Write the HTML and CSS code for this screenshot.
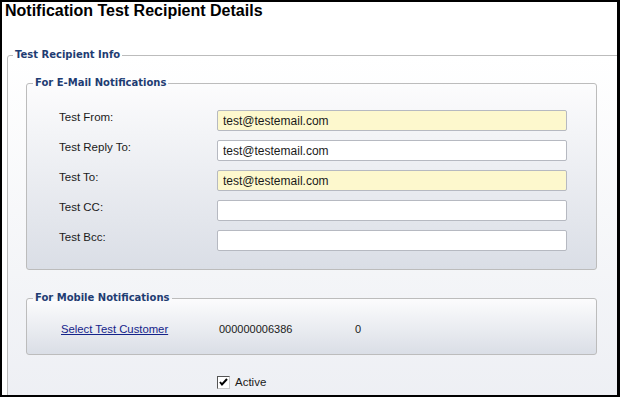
FILE: index.html
```html
<!DOCTYPE html>
<html lang="en">
<head>
  <meta charset="UTF-8" />
  <title>Notification Test Recipient Details</title>
  <link rel="stylesheet" href="styles.css">
</head>
<body>
  <div class="window">
    <h1 class="page-title">Notification Test Recipient Details</h1>

    <fieldset class="group outer">
      <legend>Test Recipient Info</legend>

      <fieldset class="group inner email">
        <legend>For E-Mail Notifications</legend>
        <div class="form-grid">
          <label for="from">Test From:</label>
          <input type="text" id="from" class="required" value="test@testemail.com">
          <label for="replyto">Test Reply To:</label>
          <input type="text" id="replyto" value="test@testemail.com">
          <label for="to">Test To:</label>
          <input type="text" id="to" class="required" value="test@testemail.com">
          <label for="cc">Test CC:</label>
          <input type="text" id="cc" value="">
          <label for="bcc">Test Bcc:</label>
          <input type="text" id="bcc" value="">
        </div>
      </fieldset>

      <fieldset class="group inner mobile">
        <legend>For Mobile Notifications</legend>
        <div class="mobile-row">
          <a href="#">Select Test Customer</a>
          <span>000000006386</span>
          <span>0</span>
        </div>
      </fieldset>

      <div class="active-row">
        <span class="checkbox">
          <svg width="11" height="11" viewBox="0 0 11 11"><path d="M2 5 L4 7.5 L9 2" fill="none" stroke="#000" stroke-width="2"/></svg>
        </span>
        <span>Active</span>
      </div>
    </fieldset>
  </div>
</body>
</html>
```

FILE: styles.css
```css
body {
  margin: 0;
  padding: 0;
  background: #fff;
  font-family: 'Liberation Sans', Arial, sans-serif;
  color: #1a1a1a;
}

.window {
  width: 620px;
  height: 397px;
  box-sizing: border-box;
  border: 2px solid #000;
  border-right-width: 3px;
  overflow: hidden;
  background: #fff;
}

.page-title {
  margin: 0;
  padding: 1px 0 0 3px;
  font-size: 16px;
  line-height: 16px;
  font-weight: bold;
  color: #000;
}

/* group boxes */
.group {
  margin: 0;
  padding: 0;
  border: 1px solid #bcbcbc;
  border-radius: 3px;
  min-inline-size: 0;
}

.group legend {
  margin-left: 5px;
  padding: 0 2px;
  font-family: 'DejaVu Sans', Tahoma, sans-serif;
  font-size: 10px;
  font-weight: bold;
  line-height: 14px;
  color: #1e3c72;
}

.outer {
  margin: 29px 0 0 5px;
  width: 640px;
  height: 380px;
  box-sizing: border-box;
  background: linear-gradient(#ffffff, #eceef3);
}

.inner {
  margin-left: 18px;
  width: 571px;
  box-sizing: border-box;
  background: linear-gradient(#fcfcfd, #dadee6);
}

.inner legend {
  margin-left: 6px;
}

.email {
  margin-top: 14px;
}

.mobile {
  margin-top: 21px;
}

.form-grid {
  display: grid;
  grid-template-columns: 158px 350px;
  row-gap: 9px;
  align-items: start;
  padding: 20px 0 18px 32px;
}

.form-grid label {
  font-size: 11.5px;
  line-height: 14px;
  color: #1a1a1a;
}

.form-grid input {
  height: 21px;
  box-sizing: border-box;
  margin: 0;
  padding: 0 5px;
  border: 1px solid #b6b9c1;
  border-radius: 2px;
  background: #fff;
  font-family: 'Liberation Sans', Arial, sans-serif;
  font-size: 12px;
  color: #1a1a1a;
  outline: none;
}

.form-grid input.required {
  background: #fdf8cd;
}

.mobile-row {
  display: grid;
  grid-template-columns: 158px 136px auto;
  padding: 17px 0 18px 34px;
  line-height: 14px;
  font-size: 11px;
}

.mobile-row a {
  color: #14238a;
  font-size: 11.3px;
}

.active-row {
  display: flex;
  align-items: center;
  gap: 5px;
  margin: 20px 0 0 209px;
  font-size: 11.5px;
  line-height: 14px;
}

.checkbox {
  width: 13px;
  height: 13px;
  box-sizing: border-box;
  border: 1px solid;
  border-color: #555 #c9c9c9 #c9c9c9 #555;
  background: #fff;
  display: flex;
  align-items: center;
  justify-content: center;
}
```
